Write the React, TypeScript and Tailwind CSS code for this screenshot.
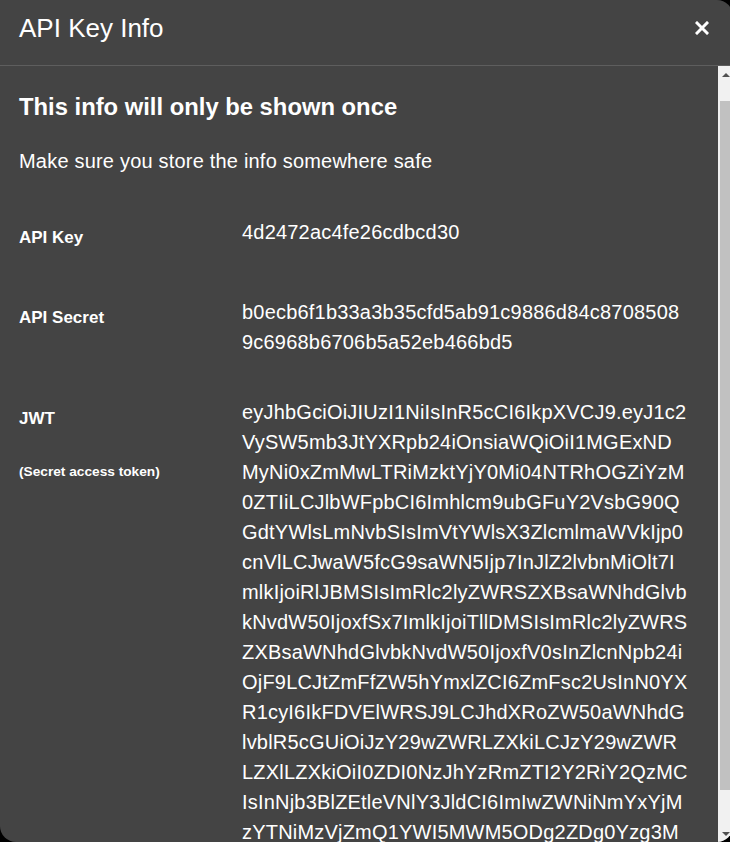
import React from "react";

const jwtLines = [
  "eyJhbGciOiJIUzI1NiIsInR5cCI6IkpXVCJ9.eyJ1c2",
  "VySW5mb3JtYXRpb24iOnsiaWQiOiI1MGExND",
  "MyNi0xZmMwLTRiMzktYjY0Mi04NTRhOGZiYzM",
  "0ZTIiLCJlbWFpbCI6Imhlcm9ubGFuY2VsbG90Q",
  "GdtYWlsLmNvbSIsImVtYWlsX3ZlcmlmaWVkIjp0",
  "cnVlLCJwaW5fcG9saWN5Ijp7InJlZ2lvbnMiOlt7I",
  "mlkIjoiRlJBMSIsImRlc2lyZWRSZXBsaWNhdGlvb",
  "kNvdW50IjoxfSx7ImlkIjoiTllDMSIsImRlc2lyZWRS",
  "ZXBsaWNhdGlvbkNvdW50IjoxfV0sInZlcnNpb24i",
  "OjF9LCJtZmFfZW5hYmxlZCI6ZmFsc2UsInN0YX",
  "R1cyI6IkFDVElWRSJ9LCJhdXRoZW50aWNhdG",
  "lvblR5cGUiOiJzY29wZWRLZXkiLCJzY29wZWR",
  "LZXlLZXkiOiI0ZDI0NzJhYzRmZTI2Y2RiY2QzMC",
  "IsInNjb3BlZEtleVNlY3JldCI6ImIwZWNiNmYxYjM",
  "zYTNiMzVjZmQ1YWI5MWM5ODg2ZDg0Yzg3M",
  "Dg1MDg5YzY5NjhiNjcwNmI1YTUyZWI0NjZiZDUi",
  "LCJpYXQiOjE2OTA4MTIzNDV9.Kq3xYw8dLm2",
];

function ScrollArrow({ up }: { up?: boolean }) {
  return (
    <div className="flex h-[17px] shrink-0 items-center justify-center">
      <svg width="8" height="4" viewBox="0 0 8 4">
        <path d={up ? "M0 4L4 0L8 4Z" : "M0 0L8 0L4 4Z"} fill="#505050" />
      </svg>
    </div>
  );
}

export default function App() {
  return (
    <div className="h-[842px] w-[730px] overflow-hidden bg-black font-['Liberation_Sans',Arial,sans-serif] text-white">
      <div className="flex h-full w-[733px] flex-col overflow-hidden rounded-tr-2xl rounded-b-2xl bg-[#444444]">
        {/* Header */}
        <div className="flex h-[66px] shrink-0 items-start justify-between border-b border-[#5e5e5e] pt-[13px] pl-[19px] pr-[21px]">
          <h1 className="text-[26px] leading-[30px] font-normal">API Key Info</h1>
          <button aria-label="Close" className="flex h-[30px] w-5 items-center justify-center">
            <svg width="14" height="14" viewBox="0 0 14 14" fill="none">
              <path d="M2 2L12 12M12 2L2 12" stroke="white" strokeWidth="3" strokeLinecap="square" />
            </svg>
          </button>
        </div>

        <div className="flex min-h-0 flex-1">
          {/* Body */}
          <div className="min-w-0 flex-1 overflow-hidden pl-[19px] pr-5 pt-[28px] pb-10">
            <h2 className="text-[23.8px] leading-[25px] font-bold">This info will only be shown once</h2>
            <p className="mt-[30px] text-[20px] leading-[24px] tracking-[0.2px]">Make sure you store the info somewhere safe</p>

            <div className="mt-[44px] grid grid-cols-[223px_1fr] gap-y-10 text-[20px] leading-[30px] tracking-[0.2px]">
              <div className="pt-[9px] pb-[7px] text-[17px] leading-[24px] tracking-normal font-bold">API Key</div>
              <div>4d2472ac4fe26cdbcd30</div>

              <div className="pt-[9px] pb-[7px] text-[17px] leading-[24px] tracking-normal font-bold">API Secret</div>
              <div>
                <div>b0ecb6f1b33a3b35cfd5ab91c9886d84c8708508</div>
                <div>9c6968b6706b5a52eb466bd5</div>
              </div>

              <div className="pt-[10px] tracking-normal">
                <div className="text-[17px] leading-[24px] font-bold">JWT</div>
                <div className="mt-[32px] text-[13.7px] leading-[18px] font-bold">(Secret access token)</div>
              </div>
              <div className="whitespace-nowrap">
                {jwtLines.map((line) => (
                  <div key={line}>{line}</div>
                ))}
              </div>
            </div>
          </div>

          {/* Scrollbar */}
          <div className="flex w-[15px] shrink-0 flex-col bg-[#f1f1f1]">
            <ScrollArrow up />
            <div className="mx-[2px] mt-[18px] h-[689px] bg-[#c1c1c1]" />
            <div className="mt-auto">
              <ScrollArrow />
            </div>
          </div>
        </div>
      </div>
    </div>
  );
}
